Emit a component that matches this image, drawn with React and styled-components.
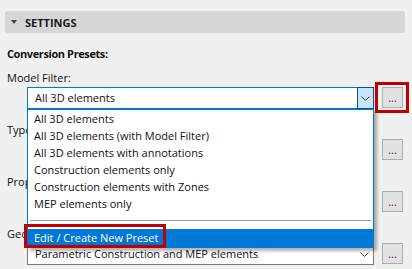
import styled, { createGlobalStyle } from "styled-components";

const GlobalStyle = createGlobalStyle`
  body {
    margin: 0;
    background: #f0f0f0;
    font-family: "Open Sans", "Noto Sans", sans-serif;
    font-size: 11px;
    color: #111;
  }
`;

const presets = [
  "All 3D elements",
  "All 3D elements (with Model Filter)",
  "All 3D elements with annotations",
  "Construction elements only",
  "Construction elements with Zones",
  "MEP elements only",
];

function App() {
  return (
    <Panel>
      <GlobalStyle />
      <Header>
        <Triangle />
        SETTINGS
      </Header>
      <Body>
        <SectionTitle>Conversion Presets:</SectionTitle>

        <FieldLabel>Model Filter:</FieldLabel>
        <Row>
          <Select $open>
            <SelectText>All 3D elements</SelectText>
            <ArrowBox $active>
              <Chevron />
            </ArrowBox>
            <DropList>
              {presets.map((p) => (
                <Item key={p}>{p}</Item>
              ))}
              <Separator />
              <Item $highlighted>
                Edit / Create New Preset
                <RedBox />
              </Item>
            </DropList>
          </Select>
          <DotsButton $marked>...</DotsButton>
        </Row>

        <FieldLabel>Type Mapping:</FieldLabel>
        <Row>
          <Select>
            <SelectText />
            <ArrowBox>
              <Chevron />
            </ArrowBox>
          </Select>
          <DotsButton>...</DotsButton>
        </Row>

        <FieldLabel>Property Mapping:</FieldLabel>
        <Row>
          <Select>
            <SelectText />
            <ArrowBox>
              <Chevron />
            </ArrowBox>
          </Select>
          <DotsButton>...</DotsButton>
        </Row>

        <FieldLabel>Geometry Conversion:</FieldLabel>
        <Row>
          <Select>
            <SelectText>Parametric Construction and MEP elements</SelectText>
            <ArrowBox>
              <Chevron />
            </ArrowBox>
          </Select>
          <DotsButton>...</DotsButton>
        </Row>
      </Body>
    </Panel>
  );
}

function Chevron() {
  return (
    <svg width="9" height="5" viewBox="0 0 9 5">
      <path d="M0.5 0.5 L4.5 4.5 L8.5 0.5" fill="none" stroke="#444" strokeWidth="1" />
    </svg>
  );
}

export default App;

const Panel = styled.div`
  width: 412px;
  height: 269px;
  overflow: hidden;
  padding-top: 11px;
  box-sizing: border-box;
`;
const Header = styled.div`
  margin: 0 7px 0 5px;
  height: 22px;
  background: #d6d6d6;
  border-radius: 3px;
  display: flex;
  align-items: center;
  gap: 8px;
  padding-left: 6px;
  font-weight: bold;
  font-size: 11px;
  color: #1a1a1a;
`;
const Triangle = styled.span`
  width: 0;
  height: 0;
  border-left: 3px solid transparent;
  border-right: 3px solid transparent;
  border-top: 4px solid #444;
`;
const Body = styled.div`
  padding: 0 9px 0 7px;
`;
const SectionTitle = styled.div`
  font-weight: bold;
  letter-spacing: -0.4px;
  line-height: 15px;
  margin: 13px 0 9px;
`;
const FieldLabel = styled.div`
  line-height: 15px;
  white-space: nowrap;
`;
const Row = styled.div`
  display: flex;
  align-items: flex-start;
  gap: 8px;
  margin: 2px 0 13px 20px;
`;
const Select = styled.div`
  position: relative;
  flex: 1;
  height: 22px;
  box-sizing: border-box;
  border: 1px solid ${(p) => (p.$open ? "#0078d7" : "#7a7a7a")};
  background: #fff;
  display: flex;
  align-items: stretch;
`;
const SelectText = styled.div`
  flex: 1;
  padding-left: 7px;
  line-height: 20px;
  white-space: nowrap;
  overflow: hidden;
`;
const ArrowBox = styled.div`
  width: 17px;
  box-sizing: border-box;
  margin: ${(p) => (p.$active ? "-1px -1px -1px 0" : "0")};
  border: ${(p) => (p.$active ? "1px solid #005499" : "none")};
  background: ${(p) => (p.$active ? "#cce4f7" : "transparent")};
  display: flex;
  align-items: center;
  justify-content: center;
`;
const DropList = styled.div`
  position: absolute;
  top: 21px;
  left: -1px;
  right: -1px;
  z-index: 5;
  background: #fff;
  border: 1px solid #0078d7;
  box-shadow: 3px 3px 3px rgba(0, 0, 0, 0.3);
`;
const Item = styled.div`
  position: relative;
  height: ${(p) => (p.$highlighted ? "18px" : "17px")};
  line-height: ${(p) => (p.$highlighted ? "18px" : "17px")};
  padding-left: 6px;
  white-space: nowrap;
  background: ${(p) => (p.$highlighted ? "#0078d7" : "transparent")};
  color: ${(p) => (p.$highlighted ? "#fff" : "#111")};
`;
const Separator = styled.div`
  margin: 8px 2px;
  border-top: 1px solid #a0a0a0;
`;
const RedBox = styled.span`
  position: absolute;
  left: -4px;
  top: -5px;
  width: 142px;
  height: 24px;
  box-sizing: border-box;
  border: 3px solid #c00000;
`;
const DotsButton = styled.div`
  position: relative;
  width: 21px;
  height: 21px;
  box-sizing: border-box;
  background: #e1e1e1;
  border: 1px solid #adadad;
  color: #6a006a;
  font-size: 11px;
  line-height: 19px;
  text-align: center;
  &::after {
    content: "";
    display: ${(p) => (p.$marked ? "block" : "none")};
    position: absolute;
    top: -6px;
    left: -8px;
    right: -7px;
    bottom: -6px;
    border: 3px solid #c00000;
  }
`;
